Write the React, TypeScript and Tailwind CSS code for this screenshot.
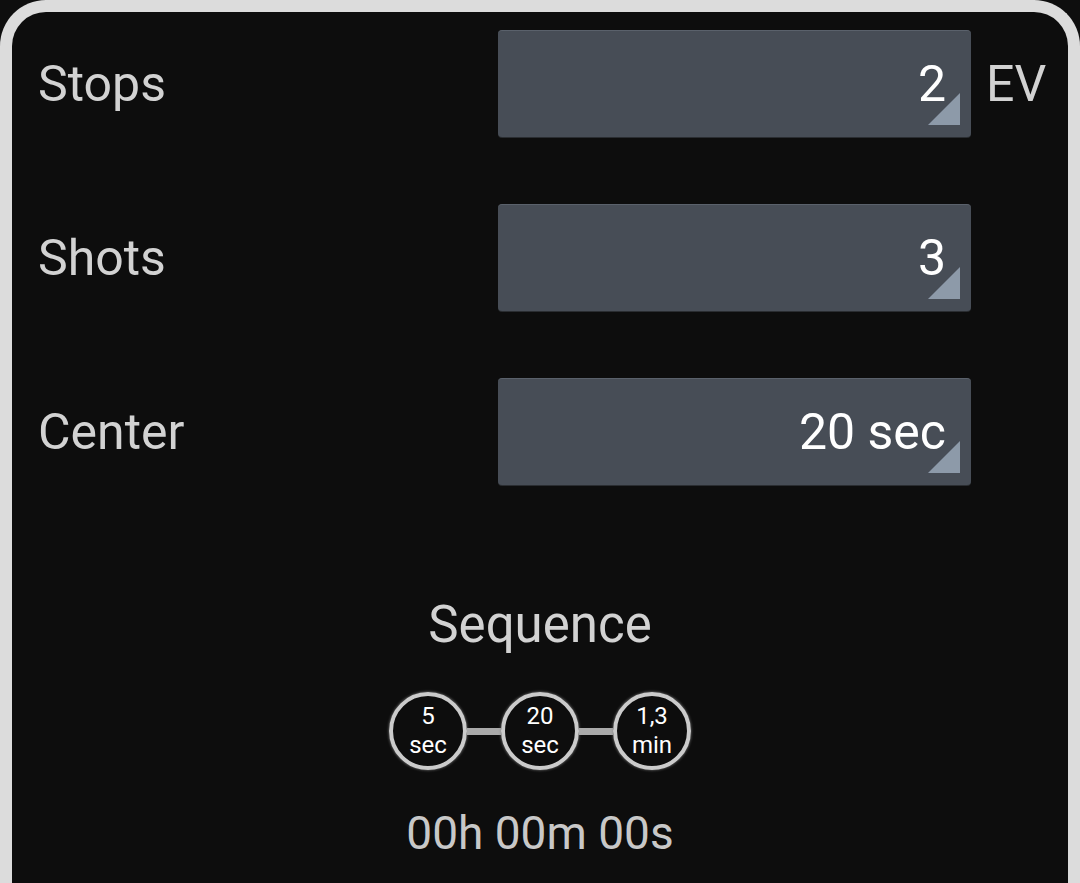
import React from 'react'

interface FieldRowProps {
  label: string
  value: string
  unit?: string
}

const FieldRow = ({ label, value, unit }: FieldRowProps) => (
  <div className="flex items-center h-[107px]">
    <div className="w-[486px] pl-[26px] text-[50px] leading-none text-[#d2d2d2]">{label}</div>
    <div className="relative w-[473px] h-[107px] rounded-[4px] bg-[#474d56] border-t border-[#5a616b] shadow-[0_1px_0_#2a2d31] flex items-center justify-end pr-[25px]">
      <span className="text-[50px] leading-none text-white">{value}</span>
      <svg className="absolute right-[11px] bottom-[12px]" width="32" height="32" viewBox="0 0 32 32">
        <polygon points="32,0 32,32 0,32" fill="#8d9aa9" />
      </svg>
    </div>
    {unit && <div className="pl-[15px] text-[50px] leading-none text-[#d2d2d2]">{unit}</div>}
  </div>
)

const Step = ({ top, bottom }: { top: string; bottom: string }) => (
  <div className="w-[78px] h-[78px] rounded-full border-[4px] border-[#cbcbcb] shadow-[0_0_3px_#888] flex flex-col items-center justify-center text-white text-[24px] leading-[29px]">
    <span>{top}</span>
    <span>{bottom}</span>
  </div>
)

const Connector = () => <div className="w-[34px] h-[7px] bg-[#a9a9a9]" />

export default function App() {
  return (
    <div className="w-[1080px] h-[883px] bg-[#0e0e0e] overflow-hidden" style={{ fontFamily: 'Roboto, "Liberation Sans", sans-serif' }}>
      <div className="h-[895px] border-[12px] border-b-0 border-[#dcdcdc] rounded-t-[46px] bg-[#0d0d0d] pt-[18px]">
        <div className="flex flex-col gap-[67px]">
          <FieldRow label="Stops" value="2" unit="EV" />
          <FieldRow label="Shots" value="3" />
          <FieldRow label="Center" value="20 sec" />
        </div>
        <div className="flex flex-col items-center">
          <div className="mt-[114px] text-[51px] leading-none text-[#d2d2d2]">Sequence</div>
          <div className="mt-[42px] flex items-center">
            <Step top="5" bottom="sec" />
            <Connector />
            <Step top="20" bottom="sec" />
            <Connector />
            <Step top="1,3" bottom="min" />
          </div>
          <div className="mt-[40px] text-[46px] leading-none text-[#c8c8c8]">00h 00m 00s</div>
        </div>
      </div>
    </div>
  )
}
